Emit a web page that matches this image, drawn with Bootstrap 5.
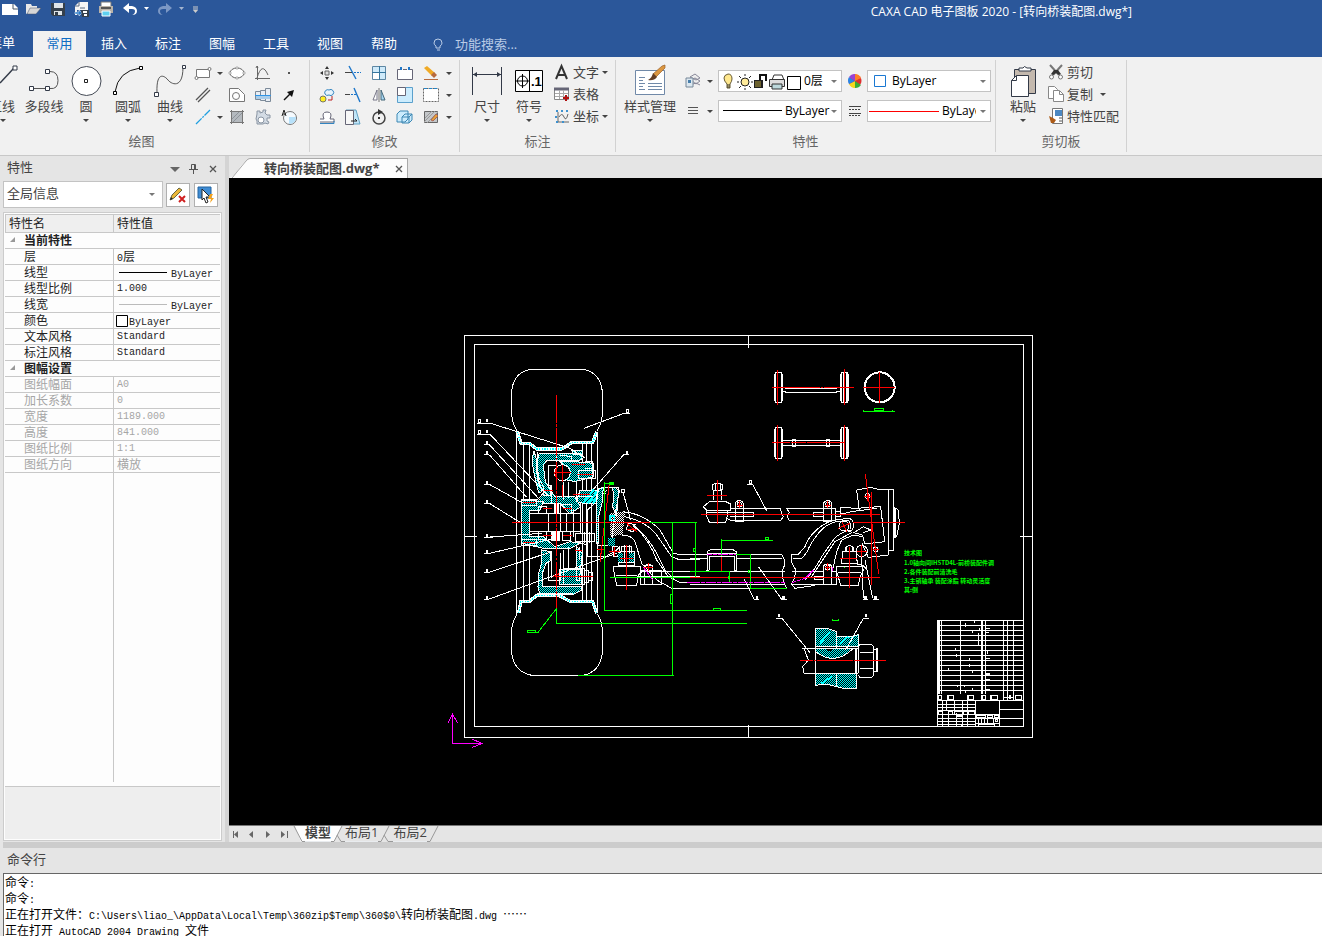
<!DOCTYPE html>
<html lang="zh-CN">
<head>
<meta charset="utf-8">
<meta name="viewport" content="width=device-width, initial-scale=1">
<title>CAXA CAD 电子图板 2020</title>
<link href="https://cdn.jsdelivr.net/npm/bootstrap@5.3.0/dist/css/bootstrap.min.css" rel="stylesheet">
<style>
  :root { --blue:#2b579a; --face:#f1f1f1; --strip:#e5e5e5; --rule:#c8c8c8; --ink:#444; }
  body { font-family:"Open Sans","Noto Sans CJK SC",sans-serif; font-size:13px; line-height:18px; color:var(--ink); background:var(--strip); overflow:hidden; }
  button { background:none; border:0; padding:0; color:inherit; font:inherit; white-space:nowrap; }
  svg { display:block; flex:none; overflow:visible; }
  .titlebar { background:var(--blue); height:31px; color:#fff; font-size:12px; }
  .titlebar button { width:24px; height:18px; }
  .titlebar .slim { width:12px; }
  .app-title { margin-right:190px; line-height:23px; }
  .menubar { background:var(--blue); height:26px; color:#fff; }
  .menubar > button { width:54px; height:26px; line-height:22px; padding-bottom:2px; }
  .menubar > .clipped { width:33px; overflow:hidden; padding-right:18px; }
  .menubar > .chosen { background:var(--face); color:#0f6cc4; width:53px; margin-right:1px; }
  .finder { background:none; border:0; color:#b9cbe6; width:90px; padding:0; outline:0; font-size:13px; }
  .finder::placeholder { color:#b9cbe6; opacity:1; }
  .ribbon { background:var(--face); height:99px; border-bottom:1px solid var(--rule); padding:3px 0; }
  .rgroup { border-right:1px solid #d2d2d2; }
  .rbody { height:73px; padding-top:2px; }
  .rname { text-align:center; color:#666; line-height:17px; }
  .g-draw { width:310px; padding-right:7px; } .g-draw .rname { padding-right:19px; } .g-edit { width:150px; } .g-note { width:156px; } .g-prop { width:380px; } .g-clip { width:131px; }
  .g-note .rbody, .g-clip .rbody { padding-left:6px; }
  .big { width:42px; padding-top:3px; height:66px; }
  .big svg:first-child { height:32px; }
  .wide { width:60px; }
  .firstbig { width:23px; overflow:hidden; }
  .firstbig span { width:26px; margin-left:-11px; }
  .grid-draw { display:grid; grid-template:repeat(3,22px)/24px 10px 24px 28px 24px; }
  .grid-edit { display:grid; grid-template:repeat(3,22px)/repeat(5,26px) 9px; padding-left:4px; }
  .grid-draw button, .grid-edit button, .cellbtn { display:flex; align-items:center; justify-content:center; }
  .caret { width:0; height:0; border:3px solid transparent; border-top-color:#444; border-bottom:0; display:inline-block; flex:none; }
  .sm { height:22px; gap:3px; line-height:16px; padding-bottom:2px; }
  .combo { width:124px; height:22px; border:1px solid #c3c3c3; background:#fff; overflow:hidden; font-size:12px; color:#000; }
  .combo select { appearance:none; border:0; outline:0; padding:0 10px 0 0; font-size:12px; color:#000; min-width:0; flex:1 1 0; height:20px; }
  .combo .short { padding-right:14px; }
  select { background:#fff url("data:image/svg+xml,%3Csvg xmlns='http://www.w3.org/2000/svg' width='6' height='3'%3E%3Cpath d='M0 0H6L3 3z' fill='%23777'/%3E%3C/svg%3E") no-repeat right 4px center; }
  .cellbtn { width:17px; height:22px; }
  .side { width:229px; border-right:4px solid #d4d4d4; padding:0 3px 1px 3px; }
  .side-title { height:25px; padding:0 0 0 4px; }
  .side-title > span { line-height:22px; padding-bottom:3px; }
  .side-title button { width:19px; height:20px; display:flex; align-items:center; justify-content:center; }
  .scope { appearance:none; width:160px; height:27px; border:1px solid #c3c3c3; color:var(--ink); padding:0 4px 3px 3px; border-radius:0; font-size:13px; }
  .tool { width:24px; height:24px; border:1px solid #b0b0b0; background:#fff; display:flex; align-items:center; justify-content:center; }
  .propbox { width:219px; margin-top:4px; border:1px solid #ccc; background:#fdfdfd; padding:1px; font-size:12px; }
  .props { width:100%; table-layout:fixed; border-collapse:separate; border-spacing:0; font-family:"Noto Sans CJK SC",sans-serif; }
  .props td, .props th { height:16px; line-height:14px; padding:0 0 1px 19px; border-bottom:1px solid #c8c8c8; white-space:nowrap; color:#222; vertical-align:middle; }
  .props thead th { height:19px; line-height:14px; padding:0 0 2px 3px; background:#efefef; border:1px solid #c8c8c8; border-width:1px 0 1px 1px; font-weight:400; }
  .props td { padding-left:3px; border-left:1px solid #c8c8c8; }
  .props td.mono { padding:1px 0 0 3px; }
  .props tbody th { font-weight:400; }
  .props tbody th[colspan] { font-weight:700; padding-left:5px; }
  .props .off th, .props .off td { color:#a6a6a6; }
  .props svg { display:inline-block; vertical-align:3px; }
  .props .swatch { vertical-align:-2px; }
  .mono { font-family:"Liberation Mono",monospace; font-size:10px; line-height:0; }
  .rest { border-bottom:1px solid #c8c8c8; padding-bottom:4px; }
  .rest > div { width:109px; border-right:1px solid #c8c8c8; height:100%; }
  .hint { height:52px; background:#eee; }
  .doctabs { height:22px; padding-top:2px; }
  .doctab { background:#fcfcfc; border:1px solid #aaa; border-width:1px 1px 0 0; height:20px; width:158px; padding-left:14px; font-weight:700; font-size:13px; }
  .doctab > span { line-height:16px; padding-bottom:2px; }
  .sheet { background:#000; min-height:0; }
  .sheets { height:17px; border-top:1px solid #777; }
  .sheets button { height:16px; line-height:12px; padding-bottom:3px; }
  .sheets .nav4 { width:16px; display:flex; justify-content:center; align-items:center; padding:0; }
  .splitter { height:6px; background:#ccc; margin-left:3px; }
  .cmd-title { height:25px; line-height:22px; padding-left:7px; }
  .cmd { height:63px; margin-left:3px; border:solid #666; border-width:1px 0 0 1px; background:#fff; color:#000; font-size:12px; line-height:16px; padding-left:1px; font-family:"Noto Sans CJK SC",sans-serif; overflow:hidden; white-space:pre; }
  .cmd > div { height:16px; }
  .ln { fill:none; stroke:#fff; stroke-width:3; }
  .rd { fill:none; stroke:#f00; stroke-width:3; }
  .gn { fill:none; stroke:#0f0; stroke-width:3; }
  .mg { fill:none; stroke:#f0f; stroke-width:3; }
  .ht { fill:url(#hatch); stroke:#fff; stroke-width:3; }
  .drawing text { fill:#0f0; font:700 6px "Noto Sans CJK SC",sans-serif; }
</style>
</head>
<body>
<div class="d-flex flex-column vh-100">
<header>
  <div class="titlebar d-flex align-items-start">
    <div class="d-flex" style="margin-left:-2px">
      <button aria-label="新建"><svg width="24" height="18"><path d="M4 4h12l4 4v7H4z" fill="#fff"/><path d="M15 4v5h5" fill="none" stroke="#456"/></svg></button>
      <button aria-label="打开"><svg width="24" height="18"><path d="M4 14V4h5l1 2h5v3" fill="#e8e8e8"/><path d="M5 14l3-6h11l-5 6z" fill="#d6d6d6" stroke="#44526b" stroke-width=".5"/></svg></button>
      <button aria-label="保存"><svg width="24" height="18"><path d="M5 3h14v13H7l-2-2z" fill="#35404c"/><path d="M8 3h9v5H8zM8 11h8v4H8z" fill="#dfe4e8"/><path d="M9 12h3v3H9z" fill="#35404c"/></svg></button>
      <button aria-label="另存为"><svg width="24" height="18"><path d="M9 2h9v8H7v5H5V6z" fill="#f5f5f5"/><path d="M5 6h4V2M10 8h5" stroke="#5a6a80" fill="none"/><path d="M5 12h4v-2l3 3-3 3v-2H5z" fill="#2679c8" stroke="#fff" stroke-width=".5"/><path d="M11 10h8v7h-7z" fill="#35404c"/><path d="M13 11h4v2h-4zM14 14h3v2h-3z" fill="#fff"/></svg></button>
      <button aria-label="打印"><svg width="24" height="18"><path d="M7 2h10v5H7z" fill="#fff" stroke="#777"/><path d="M5 6h14v7H5z" fill="#b9b2a8"/><path d="M7 8h10" stroke="#555" stroke-width="2"/><path d="M8 11h8v5H8z" fill="#5fd0f0" stroke="#fff"/></svg></button>
      <button aria-label="撤销"><svg width="24" height="18"><path d="M5 8l6-5v3h3q5 1 5 5t-5 4q3-1 3-4 0-2-3-2h-3v4z" fill="#fff"/></svg></button>
      <button class="slim" aria-label="撤销列表"><svg width="6" height="18"><path d="M2 7h5L4.500 10z" fill="#fff"/></svg></button>
      <button aria-label="重做"><svg width="24" height="18"><path d="M18 8l-6-5v3H9q-5 1-5 5t5 4q-3-1-3-4 0-2 3-2h3v4z" fill="#7c98c5"/></svg></button>
      <button class="slim" aria-label="重做列表"><svg width="6" height="18"><path d="M1 7h5L3.500 10z" fill="#a5b5cf"/></svg></button>
      <button class="slim" aria-label="自定义"><svg width="10" height="18"><path d="M3 7h5M3 9h5" stroke="#ccc"/><path d="M3 10h5L5.500 13z" fill="#ccc"/></svg></button>
    </div>
    <div class="app-title ms-auto">CAXA CAD 电子图板 2020 - [转向桥装配图.dwg*]</div>
  </div>
  <nav class="menubar d-flex align-items-center">
    <button class="clipped d-flex justify-content-end">菜单</button><button class="chosen">常用</button><button>插入</button><button>标注</button><button>图幅</button><button>工具</button><button>视图</button><button>帮助</button>
    <svg class="ms-4 me-1" width="16" height="16"><path d="M3 7a4 4 0 1 1 8 0q0 2-2 3v2H5v-2Q3 9 3 7M6 14h3" fill="none" stroke="#b9cbe6" transform="translate(-4 0)"/></svg>
    <input class="finder" aria-label="功能搜索" placeholder="功能搜索...">
  </nav>
  <div class="ribbon d-flex">
    <section class="rgroup g-draw">
      <div class="rbody d-flex">
        <button class="big firstbig d-flex flex-column align-items-start"><svg width="23" height="32"><path d="M0 18L14 3" stroke="#333a48" stroke-width="1.500"/><path d="M13 1h4v4h-4z" fill="#fff" stroke="#333a48"/></svg><span>直线</span><i class="caret mt-1"></i></button>
        <button class="big d-flex flex-column align-items-center"><svg width="32" height="32"><path d="M4 23.500H20M20 6.500h2q8 0 8 9t-8 8h-2" fill="none" stroke="#555"/><path d="M1.500 21.500h4v4h-4zM17.500 21.500h4v4h-4zM17.500 4.500h4v4h-4z" fill="#fff" stroke="#333a48"/></svg>多段线</button>
        <button class="big d-flex flex-column align-items-center"><svg width="32" height="32"><circle cx="16.500" cy="16" r="14.500" fill="#fff" stroke="#444a55"/><path d="M14.500 14.500h3v3h-3z" fill="#fff" stroke="#222"/></svg>圆<i class="caret mt-1"></i></button>
        <button class="big d-flex flex-column align-items-center"><svg width="32" height="32"><path d="M3 27Q6 6 28 3" fill="none" stroke="#111"/><path d="M1.500 26.500h3v3h-3zM27.500 1.500h3v3h-3z" fill="#fff" stroke="#000"/></svg>圆弧<i class="caret mt-1"></i></button>
        <button class="big d-flex flex-column align-items-center"><svg width="32" height="32"><path d="M3 28C2 5 11 11 14 15S29 25 29 2" fill="none" stroke="#555"/><path d="M.5 27.500h4v4h-4zM28.500 .5h3v3h-3z" fill="#fff" stroke="#333a48"/></svg>曲线<i class="caret mt-1"></i></button>
        <div class="grid-draw">
          <button aria-label="矩形"><svg width="16" height="16"><path d="M1.500 4.500h13v8h-13z" fill="#fff" stroke="#777"/><circle cx="14.500" cy="4" r="1.500" fill="#fff" stroke="#777"/><circle cx="1.500" cy="13" r="1.500" fill="#fff" stroke="#777"/></svg></button><button aria-label="更多矩形"><i class="caret"></i></button>
          <button aria-label="椭圆"><svg width="16" height="16"><ellipse cx="8" cy="8" rx="7" ry="5" fill="#fff" stroke="#666"/><path d="M7 2h2v2H7zM7 12h2v2H7zM0 7h2v2H0zM14 7h2v2h-2z" fill="#fff" stroke="#888" stroke-width=".6"/></svg></button>
          <button aria-label="函数曲线"><svg width="16" height="16"><path d="M2.500 1v14M0 13.500h15M2 13Q7-4 13 10M1 3l1-2 1 2" fill="none" stroke="#666"/></svg></button>
          <button aria-label="点"><svg width="4" height="4"><path d="M1 1h2v2H1z" fill="#555"/></svg></button>
          <button aria-label="平行线"><svg width="16" height="16"><path d="M1 13L13 1M3 15L15 3" stroke="#555" stroke-width="1.300"/></svg></button><span></span>
          <button aria-label="多边形"><svg width="16" height="16"><path d="M.5 1.500h9l6 6v7H.5z" fill="#fff" stroke="#777"/><circle cx="7" cy="9" r="3.500" fill="none" stroke="#777"/></svg></button>
          <button aria-label="轴"><svg width="16" height="16"><path d="M.5 4.500h5v8h-5zM5.500 3.500h5v10h-5zM10.500 1.500h5v13h-5z" fill="#e9eef4" stroke="#7c8a99"/><path d="M1 9h14v3H1z" fill="#a9cdea"/><path d="M0 8.500h16" stroke="#2e95e8"/></svg></button>
          <button aria-label="箭头"><svg width="12" height="12"><path d="M1 11L7 5" stroke="#111" stroke-width="1.500"/><path d="M11 1L9 8 4 3z" fill="#111"/></svg></button>
          <button aria-label="构造线"><svg width="16" height="16"><path d="M1 15L15 1" stroke="#1f9fe0" stroke-width="1.300" stroke-dasharray="8 1 2 1"/></svg></button><button aria-label="更多构造线"><i class="caret"></i></button>
          <button aria-label="填充"><svg width="16" height="16"><path d="M3 3h10v10H3z" fill="#b4b9be"/><path d="M2.500 1v14M13.500 1v14M1 2.500h14M1 13.500h14" stroke="#777" fill="none"/><path d="M3 10l7-7M4 13l9-9" stroke="#8d9399"/></svg></button>
          <button aria-label="齿轮"><svg width="16" height="16"><path d="M2 5V2h3v2l3-1V1h3l-1 3 2 2h3v3h-3v3l2 1-1 2-3-1-2 1H2v-3l-1-2z" fill="#d3dbe4" stroke="#8a95a3"/><circle cx="6" cy="11" r="3" fill="#fff" stroke="#8a95a3"/></svg></button>
          <button aria-label="局部放大"><svg width="16" height="16"><circle cx="9" cy="9" r="6.500" fill="#f5fafe" stroke="#777"/><path d="M8 8h7q0 7-7 7z" fill="#b7e1fa"/><path d="M1 7L3 1l2 6M2 5h3" stroke="#222" fill="none"/></svg></button>
        </div>
      </div>
      <div class="rname">绘图</div>
    </section>
    <section class="rgroup g-edit">
      <div class="rbody">
        <div class="grid-edit">
          <button aria-label="平移"><svg width="14" height="14"><path d="M5 5h4v4H5z" fill="#ddd" stroke="#666"/><path d="M7 0l2 3H5zM7 14l2-3H5zM0 7l3-2v4zM14 7l-3-2v4z" fill="#333"/></svg></button>
          <button aria-label="裁剪"><svg width="16" height="16"><path d="M4 1l7 13" stroke="#1d76c9" stroke-width="1.400"/><path d="M0 7.500h7" stroke="#444"/><path d="M9 7.500h7" stroke="#1d76c9" stroke-dasharray="2 1"/></svg></button>
          <button aria-label="阵列"><svg width="16" height="16"><path d="M1.500 1.500h13v13h-13z" fill="#cfeafa" stroke="#5e87a3"/><path d="M2 8h6v6H2z" fill="#fff"/><path d="M8.500 1v14M1 7.500h14" stroke="#35769f"/></svg></button>
          <button aria-label="打断"><svg width="18" height="16"><path d="M4 4.500H1.500v10h15v-10H14M7 4.500h4" fill="#fff" stroke="#667"/><path d="M4 2h2v3H4zM12 2h2v3h-2z" fill="#1d76c9"/></svg></button>
          <button aria-label="删除"><svg width="16" height="16"><path d="M1 3l3-2 8 7-3 3z" fill="#f0aa25"/><path d="M8 10l3-3 3 3-3 3z" fill="#b76a3e"/><path d="M1 14.500h14" stroke="#b76a3e"/></svg></button>
          <button aria-label="更多删除"><i class="caret"></i></button>
          <button aria-label="复制对象"><svg width="16" height="16"><circle cx="4" cy="12" r="3" fill="#ffee21" stroke="#776"/><path d="M6 7a3 3 0 0 1 4-4 3 3 0 1 1 0 5 3 3 0 0 1-4-1" fill="#e6f3fc" stroke="#3284c0"/><path d="M9 13h4V9" fill="none" stroke="#b22"/></svg></button>
          <button aria-label="延伸"><svg width="16" height="16"><path d="M9 1l6 14" stroke="#1d76c9" stroke-width="1.400"/><path d="M0 7.500h5" stroke="#444"/><path d="M6 7.500h5" stroke="#1d76c9" stroke-dasharray="2 1"/></svg></button>
          <button aria-label="镜像"><svg width="14" height="14"><path d="M5 2v10H1z" fill="#fff" stroke="#778"/><path d="M9 2v10h4z" fill="#a5d5f3" stroke="#467"/><path d="M7 0v14" stroke="#777"/></svg></button>
          <button aria-label="缩放"><svg width="16" height="16"><path d="M.5 .5h15v15H.5z" fill="#ccecfd" stroke="#5aa0cc"/><path d="M.5 .5h8v8h-8z" fill="#fff" stroke="#667"/></svg></button>
          <button aria-label="分解"><svg width="16" height="16"><path d="M.5 1.500h15v13H.5z" fill="#fff" stroke="#666" stroke-dasharray="2 1"/><path d="M1 1.500h14" stroke="#2586c9" stroke-dasharray="3 2"/></svg></button>
          <button aria-label="更多分解"><i class="caret"></i></button>
          <button aria-label="偏移"><svg width="16" height="16"><path d="M1 10h4Q2 3 8 3t3 7h4v3H1" fill="#fff" stroke="#667"/><path d="M1 14.500h14V12" stroke="#3284c0" fill="none"/></svg></button>
          <button aria-label="拉伸"><svg width="16" height="16"><path d="M1 1h10l4 14H1z" fill="#c1e5f8" stroke="#61a1c3"/><path d="M.5 1.500h8v14h-8z" fill="#f7f7f7" stroke="#667"/><path d="M6 12h6l-2-2" stroke="#222" fill="none"/></svg></button>
          <button aria-label="旋转"><svg width="16" height="16"><circle cx="8" cy="9" r="6" fill="none" stroke="#444" stroke-width="1.500"/><path d="M7 0l5 3-5 3z" fill="#333"/><path d="M7 8h2v2H7z" fill="#333"/></svg></button>
          <button aria-label="块"><svg width="18" height="16"><path d="M1 5l3-3h8v8l-3 3H1zM6 8l3-3h7v6l-3 3H6z" fill="#ccecfd" stroke="#3c87b3"/><path d="M6 8h7v6M13 8l3-3" fill="none" stroke="#3c87b3"/></svg></button>
          <button aria-label="编辑填充"><svg width="16" height="16"><path d="M1.500 2.500h13v11h-13z" fill="#c3c6c9" stroke="#666"/><path d="M2 9l7-7M4 14L15 3M1 13L12 2" stroke="#999"/><path d="M8 11l5-6 2 2-5 5z" fill="#e7a235" stroke="#a65"/></svg></button>
          <button aria-label="更多编辑"><i class="caret"></i></button>
        </div>
      </div>
      <div class="rname">修改</div>
    </section>
    <section class="rgroup g-note">
      <div class="rbody d-flex">
        <button class="big d-flex flex-column align-items-center"><svg width="32" height="32"><path d="M1.500 2v28M30.500 2v28M2 9.500h28" stroke="#333a48"/><path d="M2 9.500l4-2.500v5zM30 9.500l-4-2.500v5z" fill="#333a48"/></svg>尺寸<i class="caret mt-1"></i></button>
        <button class="big d-flex flex-column align-items-center"><svg width="32" height="32"><path d="M2.500 5.500h27v21h-27zM16.500 5v22" fill="#fff" stroke="#000"/><circle cx="9.500" cy="16" r="5" fill="none" stroke="#000"/><path d="M3 16h13M9.500 9v14" stroke="#000"/><text x="18" y="21" font-size="13" font-weight="700" font-family="Liberation Sans">.1</text></svg>符号<i class="caret mt-1"></i></button>
        <div class="d-flex flex-column">
          <button class="sm d-flex align-items-center ms-1"><svg width="16" height="16"><path d="M2 15L7.500 2 13 15M4 11h7" fill="none" stroke="#333" stroke-width="2"/></svg>文字<i class="caret"></i></button>
          <button class="sm d-flex align-items-center ms-1"><svg width="16" height="16"><path d="M.5 2.500h14v11H.5z" fill="#fff" stroke="#888"/><path d="M0 3h15" stroke="#667" stroke-width="3"/><path d="M1 7.500h13M1 10.500h13M5.500 4v9M9.500 4v9" stroke="#aaa"/><path d="M9 12h6M12 9v6" stroke="#b01010" stroke-width="2"/></svg>表格</button>
          <button class="sm d-flex align-items-center ms-1"><svg width="16" height="16"><path d="M4 4v10h11M5 9q3-5 5 0t4-3" stroke="#666" fill="none"/><path d="M2 2h2v2H2zM7 2h2v2H7zM12 2h2v2h-2zM1 8h2v2H1zM2 13h2v2H2zM8 13h2v2H8z" fill="#3d91cf"/></svg>坐标<i class="caret"></i></button>
        </div>
      </div>
      <div class="rname">标注</div>
    </section>
    <section class="rgroup g-prop">
      <div class="rbody d-flex">
        <button class="big wide d-flex flex-column align-items-center ms-1"><svg width="32" height="32"><path d="M1.500 5.500h29v24h-29z" fill="#fff" stroke="#7089a8"/><path d="M5 12.500h6M5 15.500h4M5 18.500h6M5 21.500h4M5 24.500h6M14 18.500h14M14 21.500h14M14 24.500h14" stroke="#7089a8"/><path d="M28 1l3-1v3l-9 9-3-3z" fill="#dc9740" stroke="#9a622c" stroke-width=".7"/><path d="M19 8l4 4q-3 4-9 3 4-2 5-7" fill="#643e24"/></svg>样式管理<i class="caret mt-1"></i></button>
        <div class="d-flex flex-column gap-2 pt-2 ps-1">
          <div class="d-flex align-items-center">
            <button class="cellbtn" aria-label="图层"><svg width="16" height="16"><path d="M5 4l5-3 5 4-4 2zM6 7l4-2 5 3-4 3zM8 11l3-1 4 2" fill="#eee" stroke="#889"/><path d="M1 5h7v9H1z" fill="#dce7ef" stroke="#789"/><path d="M3 7h3v3H3z" fill="#477eaa"/></svg></button><button class="cellbtn" aria-label="图层列表"><i class="caret"></i></button>
            <div class="combo d-flex align-items-center">
              <svg width="85" height="20"><path d="M9 3q4 0 4 5 0 2-2 5v4H8v-4Q5 10 5 7t4-4" fill="#ffe88e" stroke="#665a35"/><path d="M8 14h3M8 16h3" stroke="#333"/><circle cx="26" cy="11" r="4" fill="#ffeb9b" stroke="#222"/><path d="M26 3v2M26 17v2M18 11h2M32 11h2M20 5l2 2M32 5l-2 2M20 17l2-2M32 17l-2-2" stroke="#222"/><path d="M35 9h9v8h-9z" fill="#222"/><path d="M36 11h6M36 13h6M36 15h6" stroke="#b8a33c"/><path d="M41 9V4h6v6" stroke="#111" stroke-width="2" fill="none"/><path d="M53 9l2-5h8l2 5v3H53z" fill="#fff" stroke="#333"/><path d="M50.500 8.500h15v7h-15z" fill="#ddd" stroke="#333"/><path d="M53 13h10v5H53z" fill="#bcd8db" stroke="#333"/><path d="M68.500 5.500h13v13h-13z" fill="#fff" stroke="#000"/></svg>
              <select aria-label="当前层"><option>0层</option></select>
            </div>
            <button class="cellbtn ms-1" aria-label="颜色"><svg width="14" height="14"><circle cx="7" cy="7" r="6.500" fill="#e02f2f"/><path d="M7 7V0a7 7 0 0 1 6 4z" fill="#ff7f28"/><path d="M7 7l6 4a7 7 0 0 1-6 3z" fill="#39ad36"/><path d="M7 7v7a7 7 0 0 1-6-4z" fill="#f5d71c"/><path d="M7 7l-6 3a7 7 0 0 1 0-7z" fill="#2786e8"/><path d="M7 7L1 3a7 7 0 0 1 6-3z" fill="#9a42d6"/></svg></button>
            <div class="combo d-flex align-items-center ms-1"><svg width="24" height="20"><path d="M6.500 4.500h11v11h-11z" fill="#fff" stroke="#1a78d2"/></svg><select aria-label="当前颜色"><option>ByLayer</option></select></div>
          </div>
          <div class="d-flex align-items-center">
            <button class="cellbtn" aria-label="线宽"><svg width="10" height="8"><path d="M0 .5h10M0 3.500h10M0 6.500h10" stroke="#555"/></svg></button><button class="cellbtn" aria-label="线宽列表"><i class="caret"></i></button>
            <div class="combo d-flex align-items-center"><svg width="66" height="20"><path d="M4 9h59v1H4z" fill="#000"/></svg><select aria-label="当前线宽"><option>ByLayer</option></select></div>
            <button class="cellbtn ms-1" aria-label="线型"><svg width="12" height="12"><path d="M0 1.500h12M0 8.500h12" stroke="#444"/><path d="M0 4.500h12M0 10.500h12" stroke="#444" stroke-dasharray="2 1"/></svg></button>
            <div class="combo d-flex align-items-center ms-1"><svg width="74" height="20"><path d="M1 10h70v1H1z" fill="#f00"/></svg><select class="short" aria-label="当前线型"><option>ByLayer</option></select></div>
          </div>
        </div>
      </div>
      <div class="rname">特性</div>
    </section>
    <section class="rgroup g-clip">
      <div class="rbody d-flex gap-1">
        <button class="big d-flex flex-column align-items-center"><svg width="32" height="32"><path d="M7.500 4.500h21v24h-21z" fill="#c4b9ae" stroke="#333a48"/><path d="M12 6V3h4q1-3 4 0h4v3z" fill="#fff" stroke="#333a48"/><path d="M9.500 10.500h12v21h-17v-16z" fill="#fff" stroke="#333a48"/><path d="M4.500 15.500h5v-5" fill="none" stroke="#333a48"/></svg>粘贴<i class="caret mt-1"></i></button>
        <div class="d-flex flex-column">
          <button class="sm d-flex align-items-center"><svg width="16" height="16"><path d="M2 1l9 10M14 1L5 11" stroke="#777" stroke-width="2"/><path d="M6 6h4l3 4-2 1-3-2-3 2-2-1z" fill="#333"/><circle cx="3.500" cy="13" r="2" fill="#fff" stroke="#777"/><circle cx="12.500" cy="13" r="2" fill="#fff" stroke="#777"/></svg>剪切</button>
          <button class="sm d-flex align-items-center"><svg width="16" height="16"><path d="M.5 .5h6l3 3v9h-9z" fill="#fff" stroke="#888"/><path d="M5.500 4.500h6l4 4v7h-10z" fill="#fff" stroke="#888"/><path d="M11.500 5v3.500h4" stroke="#888" fill="none"/></svg>复制<i class="caret ms-1"></i></button>
          <button class="sm d-flex align-items-center"><svg width="16" height="16"><path d="M4.500 .5h10v15h-10z" fill="#fff" stroke="#777"/><path d="M7 2h7v6H7z" fill="#4c88c2"/><path d="M11 10h3M11 13h3" stroke="#555"/><path d="M1 8l4 2 3 2-2 3H3z" fill="#ad5c18"/></svg>特性匹配</button>
        </div>
      </div>
      <div class="rname">剪切板</div>
    </section>
  </div>
</header>

<main class="d-flex flex-grow-1" style="min-height:0">
  <aside class="side d-flex flex-column flex-shrink-0">
    <div class="side-title d-flex align-items-center"><span class="me-auto">特性</span>
      <button aria-label="菜单"><svg width="10" height="6"><path d="M0 1h10L5 6z" fill="#666"/></svg></button>
      <button aria-label="固定"><svg width="9" height="10"><path d="M2.500 5V.5h4V5M0 5.500h9M4.500 6v4M5.500 1v4" stroke="#555" fill="none"/></svg></button>
      <button aria-label="关闭"><svg width="8" height="8"><path d="M1 1l6 6M7 1L1 7" stroke="#555" stroke-width="1.300"/></svg></button>
    </div>
    <div class="d-flex align-items-center">
      <select class="scope" aria-label="范围" style="background-position:right 7px center"><option>全局信息</option></select>
      <button class="tool ms-auto me-1" aria-label="编辑"><svg width="18" height="18"><path d="M1 14l2-5 7-7 3 2-8 8z" fill="#ebb738" stroke="#664" /><path d="M1 14l1-3 2 2z" fill="#222"/><path d="M10 10l6 6M16 10l-6 6" stroke="#d02020" stroke-width="2"/></svg></button>
      <button class="tool me-1" aria-label="选择"><svg width="18" height="18"><path d="M1 1h13v11H1z" fill="#3f8cd4" stroke="#2564a0"/><path d="M5 3l8 8H9l2 5-2 1-2-5-2 2z" fill="#fff" stroke="#222"/><path d="M13 8l-2 5h3l-1 4 4-5h-3l2-4z" fill="#f5a21c"/></svg></button>
    </div>
    <div class="propbox d-flex flex-column flex-grow-1">
      <table class="props">
        <colgroup><col style="width:108px"><col></colgroup>
        <thead><tr><th>特性名</th><th>特性值</th></tr></thead>
        <tbody>
          <tr><th colspan="2"><svg width="14" height="5"><path d="M5 0v5H0z" fill="#999"/></svg>当前特性</th></tr>
          <tr><th>层</th><td><span class="mono">0</span>层</td></tr>
          <tr><th>线型</th><td><svg width="54" height="2"><path d="M2 0h48v1H2z" fill="#000"/></svg><span class="mono">ByLayer</span></td></tr>
          <tr><th>线型比例</th><td class="mono">1.000</td></tr>
          <tr><th>线宽</th><td><svg width="54" height="2"><path d="M2 0h48v1H2z" fill="#bbb"/></svg><span class="mono">ByLayer</span></td></tr>
          <tr><th>颜色</th><td><svg class="swatch" width="12" height="12"><path d="M-.5 .5h11v11h-11z" fill="#fff" stroke="#000"/></svg><span class="mono">ByLayer</span></td></tr>
          <tr><th>文本风格</th><td class="mono">Standard</td></tr>
          <tr><th>标注风格</th><td class="mono">Standard</td></tr>
          <tr><th colspan="2"><svg width="14" height="5"><path d="M5 0v5H0z" fill="#999"/></svg>图幅设置</th></tr>
          <tr class="off"><th>图纸幅面</th><td class="mono">A0</td></tr>
          <tr class="off"><th>加长系数</th><td class="mono">0</td></tr>
          <tr class="off"><th>宽度</th><td class="mono">1189.000</td></tr>
          <tr class="off"><th>高度</th><td class="mono">841.000</td></tr>
          <tr class="off"><th>图纸比例</th><td class="mono">1:1</td></tr>
          <tr class="off"><th>图纸方向</th><td>横放</td></tr>
        </tbody>
      </table>
      <div class="rest flex-grow-1"><div></div></div>
      <div class="hint"></div>
    </div>
  </aside>

  <section class="d-flex flex-column flex-grow-1" style="min-width:0">
    <div class="doctabs d-flex">
      <svg width="21" height="20"><path d="M0 20Q6 18 10 11T21 .5V20z" fill="#fcfcfc"/><path d="M3 20L17 3Q19 .5 21 .5" fill="none" stroke="#aaa"/></svg>
      <button class="doctab d-flex align-items-center justify-content-between pe-1"><span>转向桥装配图.dwg*</span><svg width="8" height="8"><path d="M1 1l6 6M7 1L1 7" stroke="#555" stroke-width="1.300"/></svg></button>
    </div>
    <div class="sheet flex-grow-1">
<svg class="drawing" width="100%" height="100%" viewBox="229 178 1093 647" preserveAspectRatio="xMinYMin meet" shape-rendering="crispEdges">
<defs>
  <pattern id="hatch" width="6" height="6" patternUnits="userSpaceOnUse"><rect width="6" height="6" fill="#000"/><path d="M0 0h3v3H0zM3 3h3v3H3z" fill="#0ff"/></pattern>
  <pattern id="grey" width="6" height="6" patternUnits="userSpaceOnUse"><path d="M0 0h3v3H0zM3 3h3v3H3z" fill="#fff"/></pattern>
  <pattern id="rows" width="260" height="15" patternUnits="userSpaceOnUse" y="60"><path d="M0 0h260v3H0zM0 8h260v2H0z" fill="#fff"/></pattern>
</defs>
<!-- sheet frame and origin marker -->
<g fill="none" stroke="#fff"><path d="M464.500 335.500h568v402h-568zM474.500 344.500h549v382h-549zM748.500 336v12M748.500 725v12M465 536.500h12M1020 536.500h12"/></g>
<path d="M452.500 743.500V713M448 723l4.500-9 5 9M453 743.500h30M472 739l10 4.500-10 4" fill="none" stroke="#f0f"/>

<!-- wheel, hub and king pin -->
<svg x="460" y="360" width="240" height="330" viewBox="0 0 720 990">
  <path class="ln" d="M170 212Q155 185 155 155V95Q160 35 215 28H370Q422 38 427 95V155Q427 185 412 212M170 765Q155 790 155 815V880Q162 935 215 946H370Q420 935 427 880V815Q427 785 412 762M170 212V765M190 250V725M209 250V725M367 245V730M378 245V730M394 250V725M412 215V760"/>
  <g fill="none" stroke="#fff" stroke-width="10"><path d="M172 215L183 250H208L230 267H305L335 248H398L410 215M176 760L183 724H208L232 705H295L330 724H398L410 760"/></g>
  <g fill="none" stroke="#0ff" stroke-width="4" stroke-dasharray="4 4"><path d="M172 215L183 250H208L230 267H305L335 248H398L410 215M176 760L183 724H208L232 705H295L330 724H398L410 760"/></g>
  <path class="ht" d="M237 281H362L372 292 360 300H262L250 315 256 365 275 395 285 410H345L362 440 330 462 300 430H215L240 412 252 395 235 370 228 320zM222 272L232 310 236 360 246 395 236 398 222 340 216 300zM335 270H367V283H340z"/>
  <path class="ht" d="M245 570L272 575V602L258 610 247 640V680H365V690L338 704H240L234 680 236 640 246 605zM298 628H365V672H298zM350 560L367 580 358 660H350z"/>
  <path class="ht" d="M300 305H345L400 310V350L345 365 320 360 330 335z"/>
  <circle class="ln" cx="307" cy="338" r="24" style="fill:#000"/><path class="rd" d="M283 338H332M307 314V365M292 322Q277 338 292 356"/>
  <path class="ht" d="M185 420L250 425 240 450H209V530H250L285 560 330 545 360 550 330 565H250L185 550V490z"/>
  <path class="ht" d="M360 390H425L412 430H370L350 425z"/><path d="M370 428L402 388M384 430L418 388M398 430L425 396" stroke="#0ff" stroke-width="7"/>
  <path class="ln" d="M207 460H360M207 515H360M207 460V515M264 460V515M302 460V515M320 460V515M341 448V530M360 430V520M236 438H260V460H236zM302 432H335V460H302zM236 515H260V538H236zM306 515H330V540H306z"/>
  <path d="M266 460h36v55h-36z" fill="#000" stroke="#fff" stroke-width="3"/>
  <path d="M283 432h14v28h-14zM274 515h26v28h-26z" fill="#fff"/>
  <path class="ln" d="M233 275V345L250 380V405H272V375H262M288 280V315H265V385M310 365V420M325 365V415M300 285L335 290V306M350 365V415M273 375V430M264 605V660H300V580M310 570V640M326 560V626M273 575V655M183 418H230V436H183zM183 538H230V556H183zM350 390V410H398M345 520H404V545H345zM372 517V548M388 517V548M375 305H398V325H375M355 330H406V354H355V330M398 328V356M310 626H372V672H310zM372 630H384V668H372M384 636H398V660H384M290 300V315"/>
  <path class="ln" d="M382 588V450L405 430M382 588H440L470 570 480 560M350 545L382 555M358 560V600M235 700H340M230 270H290"/>
  <path class="ht" d="M412 388L430 382 426 430 416 470V550H408V440zM455 382H476L470 470 458 440 462 400z"/>
  <path class="ln" d="M415 388L430 382H465L478 392 466 460 456 530 458 556H415L408 540 408 440z"/>
  <path d="M450 460L495 455 488 525 450 528zM430 400l8-14 4 4-8 20z" fill="url(#grey)"/>
  <path d="M445 535h20v22h-20z" fill="url(#hatch)"/><path d="M450 468h14v14h-14z" fill="none" stroke="#0ff" stroke-width="4"/>
  <path class="ln" d="M488 455Q550 460 600 510L640 580 655 583H720M495 470Q560 485 590 525L635 590 655 598H720M530 505Q570 545 590 600L625 650 660 668H720M485 525Q515 525 525 545L545 610 590 660 635 685H720M520 495Q560 525 590 580L615 630 645 660"/>
  <path class="ln" d="M505 490l20 4-6 22-20-8zM518 498l12 8-12 8M483 575V558H515V575L524 615H475zM492 556V610M508 556V610M476 575H522V608H476zM460 618H540L545 636 535 645 530 676H470L463 645zM468 645H532M541 632H605V672H541zM553 615H578V672H553zM530 650H720M545 634H720M553 630Q555 610 567 612T578 630M458 560Q475 555 480 570L472 590H460z"/>
  <path d="M475 578h14v28h-14zM508 578h14v28h-14z" fill="url(#hatch)"/>
  <path class="ln" d="M92 190L330 265 370 292M90 223L262 405M88 254L240 420M88 284L200 412M88 373L190 430M88 430L180 487M90 531L245 520M88 580L285 535M88 637L275 575M88 717L300 640 470 580M372 205L492 160H510M492 283L400 388M492 283H508M490 400L512 480"/>
  <path class="ln" d="M50 190H92M50 223H90M72 254H88M72 284H88M72 373H88M72 430H88M72 531H98M72 580H88M72 637H88M72 717H88M54 178h8v8h-8zM54 212h8v8h-8zM498 148h8v10h-8zM484 388h8v10h-8z"/>
  <path d="M77 178h7v9h-7zM77 210h7v9h-7zM77 243h7v9h-7zM77 273h7v9h-7zM77 362h7v9h-7zM77 420h7v9h-7zM77 521h7v9h-7zM77 570h7v9h-7zM77 628h7v9h-7zM77 708h7v9h-7zM498 273h7v9h-7z" fill="#fff"/>
  <path class="rd" stroke-dasharray="84 4 8 4" d="M290 105V765"/>
  <path class="rd" d="M157 487H570M433 370V610M448 370L420 605M190 427H225M190 547H225M335 314H375M350 342H400M340 403H390M285 649H400M307 375V412M345 571H365M500 555V690M410 568H436M423 555V583M448 574H480M464 560V588M480 595H520M500 490L530 515M500 508H530M553 622H580M566 608V632M250 445H275M310 445H335M250 525H275M310 525H335M253 390H280M280 649L298 641"/>
  <path class="gn" d="M570 487H710M707 487V652M638 487V946M355 946H641M450 652H1080M433 365V751H860M290 745V790H860M290 745L235 816H203V810H227V816M631 703H636V730H631zM700 566H706V575H700zM449 366H460V373H449zM433 370H460"/>
  <path class="mg" d="M549 620L578 660M680 667H720"/>
</svg>

<!-- steering rod, axle beam and right knuckle -->
<svg x="690" y="470" width="330" height="150" viewBox="0 0 990 450">
  <path class="ln" d="M67 45L75 40H90L98 45V58L92 62H72L67 58zM70 62V90M95 62V90M75 40V62M90 40V62M60 94H105L122 102V120H112V138L107 157H58L50 138V120L40 110 60 94M50 122H112M50 128H112M112 126H190V138H120M122 115H270L275 130 280 140 272 152H122L112 145M135 152V103Q137 92 148 92T160 103V154H135M290 115H425M290 115L298 128 292 140 298 152H425M400 103Q402 92 413 92T425 103V154H400zM425 115H436V152H425M436 125H450V140H436M370 128H400M370 138H400M370 128V138"/>
  <circle class="ln" cx="148" cy="104" r="7"/><circle class="ln" cx="413" cy="104" r="7"/>
  <path class="ln" d="M0 253H50M140 253H275M0 266H50M140 266H275M0 304H285M305 304H400M0 342H285M305 342H400M0 355H290M52 302V245L62 238H128L138 245V302M52 250H138M57 300V260H133V300M48 302H58M132 302H142M275 253Q290 275 280 295T290 355M305 253Q300 275 312 290T305 342L315 355 370 347 385 342M305 253H325L345 230Q355 200 385 175T450 148L478 145Q492 150 490 170T470 182M308 266H335L352 245Q358 225 385 190T455 153L470 150Q487 155 480 178M485 180Q450 185 430 210L395 260Q375 300 345 330M485 188L435 215 405 260 365 320M518 200L490 195 455 210 440 245 428 300"/>
  <path class="ln" d="M450 112L500 115 565 110 572 110 584 215 525 222 517 195 492 188 520 170 542 180 520 188M450 133L490 124 560 115M500 60L540 52 562 57H595V255L535 262 520 230 518 220M500 60L508 120M595 57H610V240H595M610 110L625 120 628 160 620 200H610M450 112V133"/>
  <path d="M611 115h6v90h-6z" fill="#fff"/>
  <circle class="ln" cx="462" cy="168" r="15"/><circle class="ln" cx="532" cy="78" r="7"/><circle class="ln" cx="515" cy="243" r="17"/><circle class="ln" cx="557" cy="238" r="7"/>
  <path class="ln" d="M465 245V232L478 226 490 232V245M468 230V245M487 230V245M458 245H498L502 280 455 280zM440 290H515L520 300 510 320 505 346H452L446 325 440 305zM445 308H512M400 342V292Q402 282 413 282T425 292V342zM425 305H438V342H425M375 318H400M375 328H400M375 318Q368 323 375 328M515 260L520 385M525 270L548 385M500 285Q520 280 530 300"/>
  <circle class="ln" cx="413" cy="293" r="7"/>
  <path class="ln" d="M188 43L230 122M172 43H188M177 31h8v8h-8zM205 290L275 388H290M162 328L193 388H208M518 388H535M549 388H566"/>
  <path d="M197 378h8v9h-8zM277 378h8v9h-8zM523 378h8v9h-8zM553 378h8v9h-8zM263 433h8v9h-8zM524 433h8v9h-8z" fill="#fff"/>
  <path class="ln" d="M258 446H276M520 446H536"/>
  <path class="rd" d="M33 133H570M52 76H110M82 30V163M140 105H158M148 92V115M404 105H422M413 92V115M490 157H645M526 12L566 312M544 65V345M522 78H545M532 68V92M445 175L480 160M455 155L470 185M500 243H530M515 225V260M548 238H568M557 228V250M450 265H500M478 232V355M404 293H422M413 280V302M95 260V304M0 323H570"/>
  <path class="gn" d="M0 157H20M16 157V322M10 235H16V244H10zM94 208V258M94 211H248M226 202H235V208H226zM182 253V355H290M138 253H182M0 304H118V340M114 318V326M175 300H181V307H175zM0 421H170M70 415H91V421H70zM463 293H466M426 450H432M440 450H446"/>
  <path class="mg" stroke-dasharray="14 2" d="M52 253H138M0 338H285M305 338L345 325 370 300M426 290V302"/>
</svg>
<g><text x="904" y="555">技术图</text><text x="904" y="565">1.0轴向间IHSTD4L-前桥装配件调</text><text x="904" y="574">2.各件装配前清洗毛</text><text x="904" y="583">3.主销轴承 装配涂脂 转动灵活度</text><text x="904" y="592">其:倒</text></g>

<!-- track outline views -->
<svg x="750" y="360" width="160" height="110" viewBox="0 0 480 330">
  <path class="ln" d="M75 38H93V127H75zM72 42V124M96 42V124M274 38H293V127H274zM271 42V124M296 42V124M279 38V127M288 38V127M106 86H260M106 97H260M96 94H106V97M260 97V94H271M75 203H93V295H75zM72 207V291M96 207V291M274 203H293V295H274zM271 207V291M296 207V291M279 203V295M288 203V295M96 241H271M96 256H271M127 238H137V260H127zM229 238H239V260H229z"/>
  <circle cx="389" cy="82" r="45" fill="none" stroke="#fff" stroke-width="6"/>
  <path class="rd" d="M66 82H210M214 82H218M222 82H312M82 30V135M283 27V135M340 82H435M389 35V130M66 247H120M124 247H168M172 247H285M82 195V303M283 195V303"/>
  <path class="gn" d="M340 150V154H435M428 150V154M373 145H401V152H373z"/>
</svg>

<!-- bolt section and title block -->
<svg x="760" y="600" width="280" height="145" viewBox="0 0 840 435">
  <path class="ht" d="M167 85H200L229 94V139H167zM230 109H280L295 103V139H230zM167 145H280Q225 200 167 155zM167 221H289V265H250L229 260 200 252 167 256z"/>
  <path d="M195 145h25l-8 9h-10z" fill="#000"/><path d="M180 130l30-35M185 250l30-20M240 130l25-20" stroke="#0ff" stroke-width="5"/>
  <path class="ln" d="M127 145H295M167 85V256M229 94V145M229 221V260M295 103V218M132 145L145 180 128 200 132 220H295M289 145V265M295 138L300 133H335L341 140V225L335 232H300L295 225M300 157H338M300 205H338M341 148H350M341 215H350M50 55H66L150 158M310 55H326M310 55L257 150"/>
  <path d="M350 145v72M289 145v75" stroke="#fff" stroke-width="6"/><path d="M54 42h7v9h-7zM315 42h7v9h-7z" fill="#fff"/>
  <path class="rd" stroke-width="4" d="M120 181H160M163 181H168M171 181H280M283 181H378"/>
  <path class="gn" d="M217 57V62M222 62H236V57"/>
  <path d="M533 60h257v224H533z" fill="url(#rows)"/>
  <path class="ln" d="M533 60V382M543 60V282M601 60V282M730 60V300M742 60V300M760 60V300M790 60V382M676 60V282M533 301H790M615 70V80M643 62V69M637 92V100M658 84V92M655 100V138M586 143V150M589 162V170M628 173V180M628 192V200M565 204V210M637 213V220M592 255V262M612 255V262M637 263V272M617 272V280"/>
  <path d="M666 60v222M537 60v222" stroke="#fff" stroke-width="5" fill="none"/>
  <path d="M678 85h12M678 97h8M682 153v8M678 175h12M678 222h12M678 238h12M678 268h12" stroke="#fff" stroke-width="5"/>
  <g fill="none" stroke="#fff" stroke-width="4"><path d="M535 286h10v13h-10zM564 286h16v13h-16zM624 286h16v13h-16zM666 286h10v13h-10zM693 286h19v13h-19zM732 292h26M750 286v10M767 286h17v13h-17z"/></g>
  <path class="ln" d="M547 301V382M559 301V330M583 301V330M607 301V330M622 301V382M646 301V382M565 340V382M589 340V382M607 340V382M533 312H646M533 321H646M533 331H646M533 344H646M533 354H646M533 364H646M533 374H646M718 301V382M646 343H718M646 355H718M646 370H718M718 328H790M718 355H790M656 355V370M665 355V370M674 355V370M683 355V370M700 355V370"/>
  <path d="M535 333h12v9h-12zM566 333h12v9h-12zM584 333h22v9h-22zM610 333h12v9h-12zM626 333h18v9h-18zM650 345h26v8h-26zM683 345h14v8h-14zM702 345h14v8h-14zM706 359h6v6h-6zM656 373h48v6h-48zM590 346h16v4h-16zM590 374h14v5h-14z" fill="none" stroke="#fff" stroke-width="3"/>
</svg>
</svg>
    </div>
    <div class="sheets d-flex">
      <button class="nav4" aria-label="第一张"><svg width="8" height="7"><path d="M.5 0v7" stroke="#666"/><path d="M5 0v7L1 3.500z" fill="#666"/></svg></button>
      <button class="nav4" aria-label="上一张"><svg width="8" height="7"><path d="M4 0v7L0 3.500z" fill="#666"/></svg></button>
      <button class="nav4" aria-label="下一张"><svg width="8" height="7"><path d="M1 0v7l4-3.500z" fill="#666"/></svg></button>
      <button class="nav4" aria-label="最后一张"><svg width="8" height="7"><path d="M6.500 0v7" stroke="#666"/><path d="M0 0v7l4-3.500z" fill="#666"/></svg></button>
      <svg width="12" height="16"><path d="M2 0h10v16H8z" fill="#fdfdfd"/><path d="M1 0l8 15.500h3" fill="none" stroke="#999"/></svg>
      <button class="fw-bold bg-white border-bottom border-secondary-subtle">模型</button>
      <svg width="14" height="16"><path d="M0 0h11L3 16H0z" fill="#fdfdfd"/><path d="M0 15.500h3L11 0M6 9l4 6.500h4" fill="none" stroke="#999"/></svg>
      <button class="border-bottom border-secondary-subtle">布局1</button>
      <svg width="15" height="16"><path d="M0 15.500h3L11 0M6 9l4 6.500h5" fill="none" stroke="#999"/></svg>
      <button class="border-bottom border-secondary-subtle">布局2</button>
      <svg width="15" height="16"><path d="M0 15.500h3L11 0" fill="none" stroke="#999"/></svg>
    </div>
  </section>
</main>
<div class="splitter flex-shrink-0"></div>
<footer class="flex-shrink-0">
  <div class="cmd-title">命令行</div>
  <div class="cmd"><div>命令<span class="mono">:</span></div><div>命令<span class="mono">:</span></div><div>正在打开文件：<span class="mono">C:\Users\liao_\AppData\Local\Temp\360zip$Temp\360$0\</span>转向桥装配图<span class="mono">.dwg </span>……</div><div>正在打开<span class="mono"> AutoCAD 2004 Drawing </span>文件</div></div>
</footer>
</div>
<script src="https://cdn.jsdelivr.net/npm/bootstrap@5.3.0/dist/js/bootstrap.bundle.min.js"></script>
</body>
</html>
